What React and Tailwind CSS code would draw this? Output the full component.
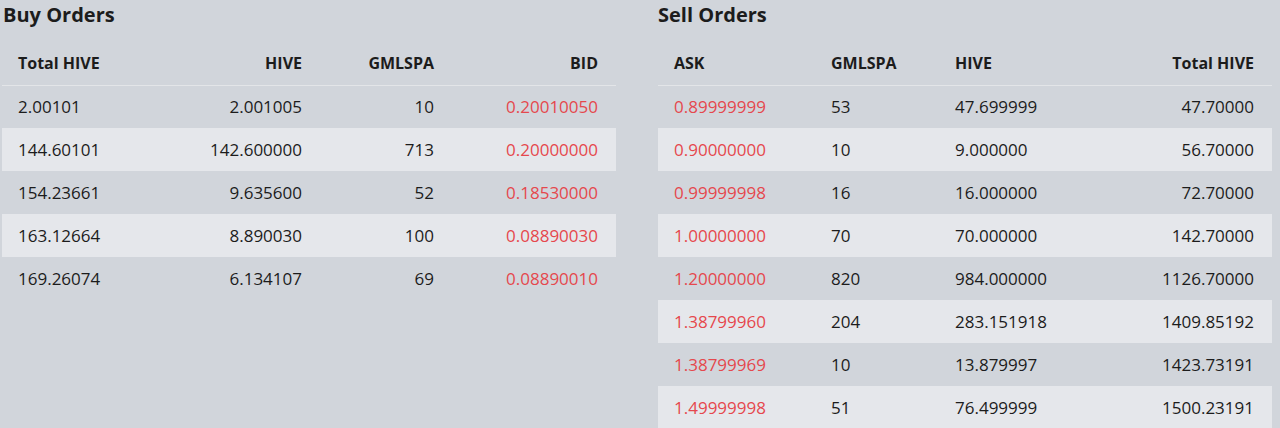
import React from "react";

const buyOrders = [
  { total: "2.00101", hive: "2.001005", qty: "10", bid: "0.20010050" },
  { total: "144.60101", hive: "142.600000", qty: "713", bid: "0.20000000" },
  { total: "154.23661", hive: "9.635600", qty: "52", bid: "0.18530000" },
  { total: "163.12664", hive: "8.890030", qty: "100", bid: "0.08890030" },
  { total: "169.26074", hive: "6.134107", qty: "69", bid: "0.08890010" },
];

const sellOrders = [
  { ask: "0.89999999", qty: "53", hive: "47.699999", total: "47.70000" },
  { ask: "0.90000000", qty: "10", hive: "9.000000", total: "56.70000" },
  { ask: "0.99999998", qty: "16", hive: "16.000000", total: "72.70000" },
  { ask: "1.00000000", qty: "70", hive: "70.000000", total: "142.70000" },
  { ask: "1.20000000", qty: "820", hive: "984.000000", total: "1126.70000" },
  { ask: "1.38799960", qty: "204", hive: "283.151918", total: "1409.85192" },
  { ask: "1.38799969", qty: "10", hive: "13.879997", total: "1423.73191" },
  { ask: "1.49999998", qty: "51", hive: "76.499999", total: "1500.23191" },
];

export default function App() {
  return (
    <div
      className="w-[1280px] h-[428px] overflow-hidden bg-[#d1d5db] text-[#1c1c1c] flex gap-[42px] pl-[2px]"
      style={{ fontFamily: "'Open Sans', 'Liberation Sans', sans-serif" }}
    >
      {/* Buy side */}
      <div className="w-[614px]">
        <h2 className="text-[20px] font-bold leading-[30px] pl-[1px]">Buy Orders</h2>
        <table className="w-full mt-[12px] text-[17px] table-fixed border-collapse">
          <thead>
            <tr className="h-[43px] border-b border-[#e3e5e8] text-[16px]">
              <th className="w-[148px] pl-4 text-left font-bold">Total HIVE</th>
              <th className="w-[168px] pr-4 text-right font-bold">HIVE</th>
              <th className="w-[132px] pr-4 text-right font-bold">GMLSPA</th>
              <th className="pr-[18px] text-right font-bold">BID</th>
            </tr>
          </thead>
          <tbody>
            {buyOrders.map((o, i) => (
              <tr key={i} className={"h-[43px] " + (i % 2 === 1 ? "bg-[#e5e7eb]" : "")}>
                <td className="pl-4">{o.total}</td>
                <td className="pr-4 text-right">{o.hive}</td>
                <td className="pr-4 text-right">{o.qty}</td>
                <td className="pr-[18px] text-right text-[#e5484d]">{o.bid}</td>
              </tr>
            ))}
          </tbody>
        </table>
      </div>

      {/* Sell side */}
      <div className="w-[614px]">
        <h2 className="text-[20px] font-bold leading-[30px]">Sell Orders</h2>
        <table className="w-full mt-[12px] text-[17px] table-fixed border-collapse">
          <thead>
            <tr className="h-[43px] border-b border-[#e3e5e8] text-[16px]">
              <th className="w-[157px] pl-4 text-left font-bold">ASK</th>
              <th className="w-[124px] pl-4 text-left font-bold">GMLSPA</th>
              <th className="w-[170px] pl-4 text-left font-bold">HIVE</th>
              <th className="pr-[18px] text-right font-bold">Total HIVE</th>
            </tr>
          </thead>
          <tbody>
            {sellOrders.map((o, i) => (
              <tr key={i} className={"h-[43px] " + (i % 2 === 1 ? "bg-[#e5e7eb]" : "")}>
                <td className="pl-4 text-[#e5484d]">{o.ask}</td>
                <td className="pl-4">{o.qty}</td>
                <td className="pl-4">{o.hive}</td>
                <td className="pr-[18px] text-right">{o.total}</td>
              </tr>
            ))}
          </tbody>
        </table>
      </div>
    </div>
  );
}
